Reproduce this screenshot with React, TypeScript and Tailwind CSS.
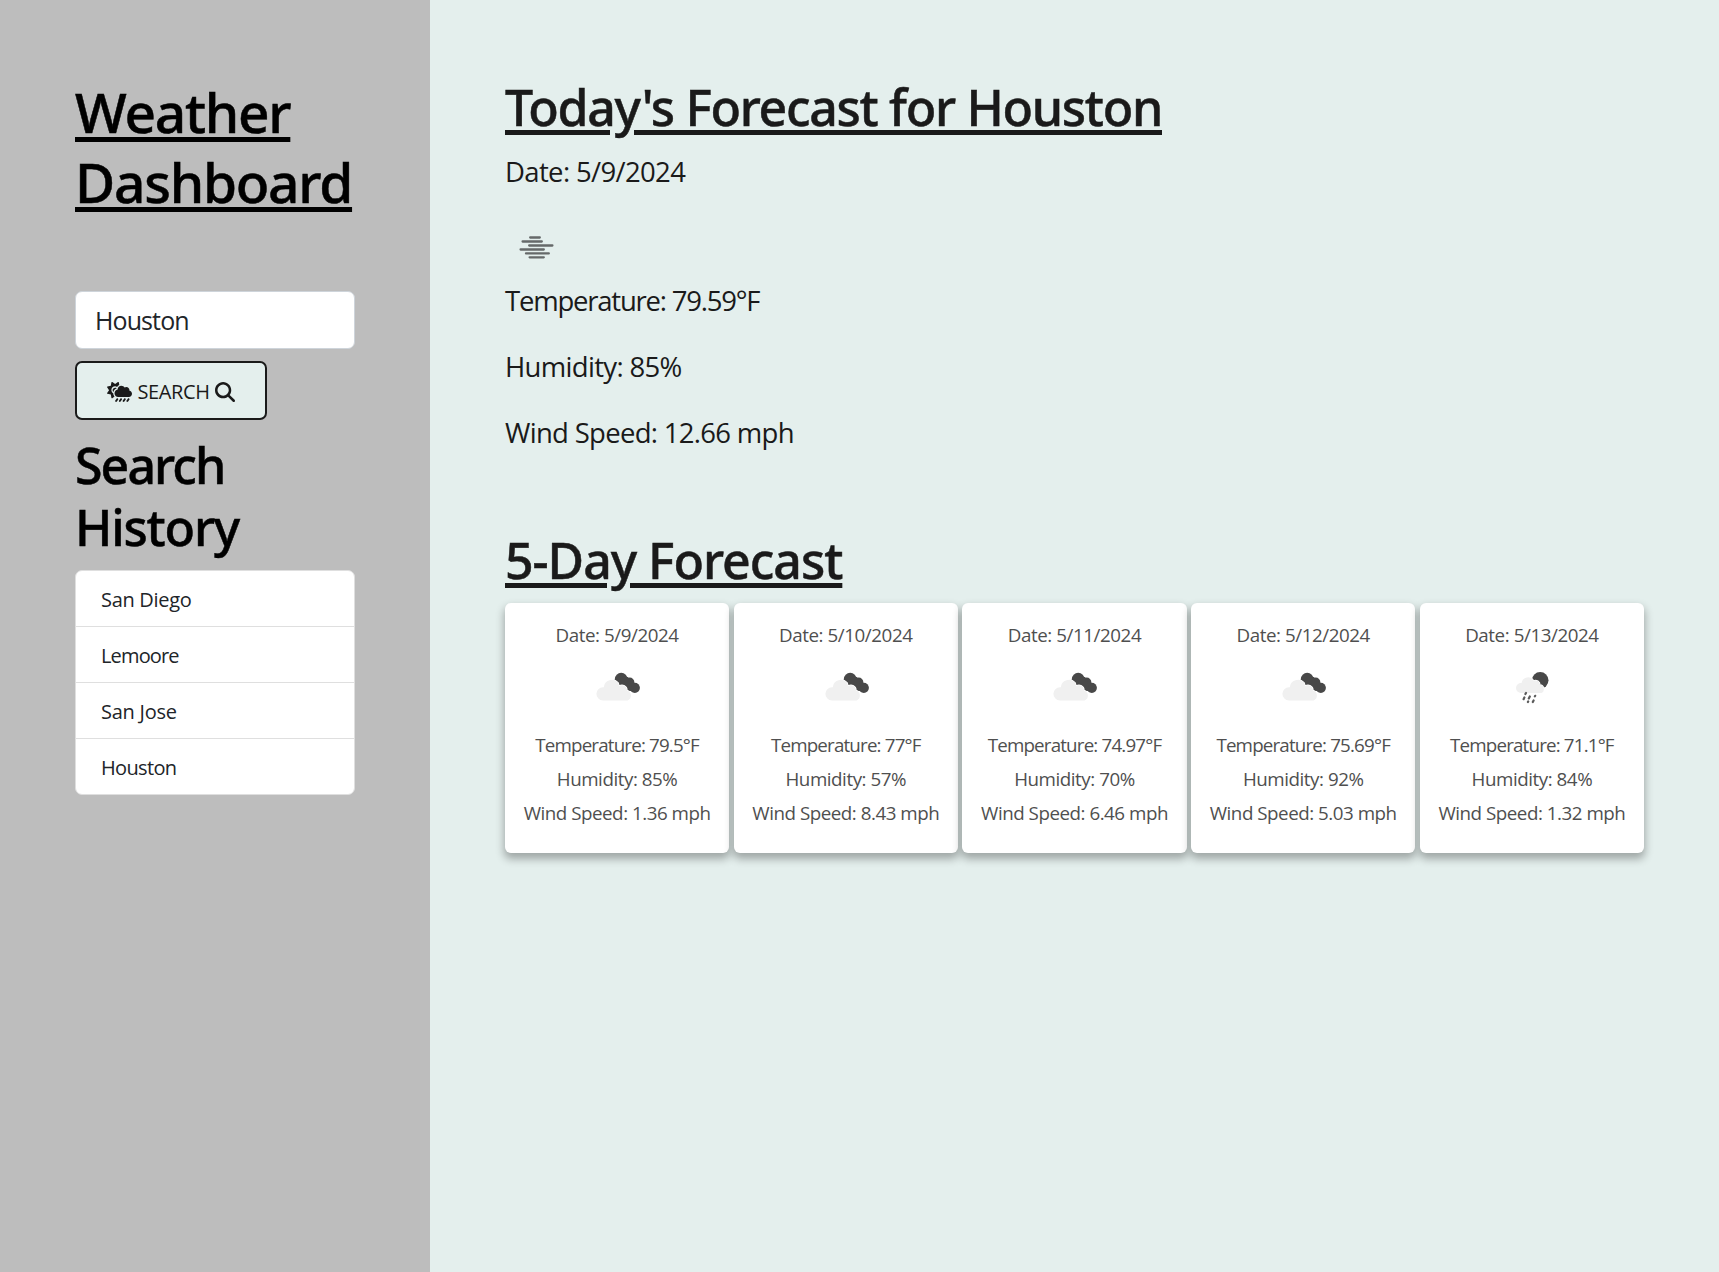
import { FaCloudSunRain, FaMagnifyingGlass } from 'react-icons/fa6';

const history = [
  { city: 'San Diego', tracking: 'tracking-[-0.3px]' },
  { city: 'Lemoore', tracking: 'tracking-[-0.85px]' },
  { city: 'San Jose', tracking: 'tracking-[-0.25px]' },
  { city: 'Houston', tracking: 'tracking-[-0.65px]' },
];

const days = [
  { date: '5/9/2024', icon: 'clouds', temp: '79.5', humidity: '85', wind: '1.36' },
  { date: '5/10/2024', icon: 'clouds', temp: '77', humidity: '57', wind: '8.43' },
  { date: '5/11/2024', icon: 'clouds', temp: '74.97', humidity: '70', wind: '6.46' },
  { date: '5/12/2024', icon: 'clouds', temp: '75.69', humidity: '92', wind: '5.03' },
  { date: '5/13/2024', icon: 'rain', temp: '71.1', humidity: '84', wind: '1.32' },
];

function MistIcon() {
  return (
    <svg viewBox="0 0 64 64" className="block size-16" stroke="#656969" strokeWidth="2.3" strokeLinecap="round">
      <path d="M25.2 20.5H34.8M17.6 24.5H36.8M24.2 28.5H47.4M15.6 32.5H38.8M21 36.4H43.8M24.6 40.3H38.8" />
    </svg>
  );
}

function CloudsIcon() {
  return (
    <svg viewBox="0 0 64 64" className="block size-16">
      <g fill="#484848">
        <circle cx="36.2" cy="24.2" r="6.4" />
        <circle cx="44.6" cy="27.4" r="4.8" />
        <circle cx="49.8" cy="32.8" r="5.1" />
        <path d="M35 22H43L49 36H42Z" />
      </g>
      <path
        d="M18 45.4A6.6 6.6 0 0 1 18 32.2H18.8A8.2 8.2 0 0 1 33 27.6L34.2 31.2A5 5 0 0 1 42 35.4A5.3 5.3 0 0 1 42.6 45.4Z"
        fill="#f0f0f0"
        stroke="#fff"
        strokeWidth="1.4"
        paintOrder="stroke"
      />
    </svg>
  );
}

function RainIcon() {
  return (
    <svg viewBox="0 0 64 64" className="block size-16">
      <circle cx="40.2" cy="25.3" r="8.3" fill="#484848" />
      <path
        d="M21 38A5 5 0 0 1 21 28H21.6A6.4 6.4 0 0 1 33.6 25.8A4.6 4.6 0 0 1 40 30A4.2 4.2 0 0 1 41.4 38Z"
        fill="#f0f0f0"
        stroke="#fff"
        strokeWidth="1.4"
        paintOrder="stroke"
      />
      <path
        d="M26 38L25.4 39M24.4 42.4L23.6 44.2M29.8 41.4L28.8 43.4M28.2 46.4L27.9 47M35.2 40.8L34.9 41.3M33.6 45.4L32.8 47"
        stroke="#5a5a5a"
        strokeWidth="2.2"
        strokeLinecap="round"
      />
    </svg>
  );
}

export default function App() {
  return (
    <div className="flex h-[1272px] w-full bg-[#e4efed] font-['Open_Sans',sans-serif] text-[#1a1a1a]">
      <aside className="w-[430px] shrink-0 bg-[#bdbdbd] px-[75px] pt-[77px]">
        <h1 className="font-['Noto_Sans',sans-serif] text-[55px] leading-[70px] font-medium tracking-[-1.25px] text-black underline decoration-[5px] underline-offset-[3.5px] [-webkit-text-stroke:0.5px]">
          Weather Dashboard
        </h1>
        <form className="mt-[74px]">
          <input
            readOnly
            value="Houston"
            className="block h-[58px] w-[280px] rounded-[7px] border border-[#ced4da] bg-white pr-4 pl-[19px] text-[25px] tracking-[-0.9px] text-[#212529] outline-none"
          />
          <button
            type="button"
            className="mt-3 flex h-[59px] w-48 items-center justify-center gap-[5px] rounded-[7px] border-2 border-[#1a1a1a] bg-[#e4efed] pt-0.5 text-[20px] tracking-[-0.4px]"
          >
            <FaCloudSunRain className="h-5 w-[25px]" />
            SEARCH
            <FaMagnifyingGlass className="size-5" />
          </button>
        </form>
        <h2 className="mt-3.5 flex flex-col font-['Noto_Sans',sans-serif] text-[50px] leading-[62px] font-medium text-black [-webkit-text-stroke:0.5px]">
          <span className="tracking-[-1.9px]">Search</span>
          <span className="tracking-[-1.2px]">History</span>
        </h2>
        <ul className="mt-3 w-[280px] divide-y divide-[#dfdfdf] rounded-[7px] border border-[#dfdfdf] bg-white text-[20px] text-[#212529]">
          {history.map(({ city, tracking }) => (
            <li key={city} className={`h-14 pl-[25px] leading-[57px] last:h-[55px] ${tracking}`}>
              {city}
            </li>
          ))}
        </ul>
      </aside>

      <main className="grow px-[75px] pt-[76px]">
        <section>
          <h2 className="font-['Noto_Sans',sans-serif] text-[50px] leading-[63px] font-medium tracking-[-1.3px] underline decoration-[5px] underline-offset-[3.5px] [-webkit-text-stroke:0.5px]">
            Today's Forecast for Houston
          </h2>
          <div className="mt-3 text-[27.5px] leading-[42px]">
            <p className="tracking-[-0.65px]">Date: 5/9/2024</p>
            <div className="mt-6 -mb-px">
              <MistIcon />
            </div>
            <p className="tracking-[-1.22px]">Temperature: 79.59°F</p>
            <p className="mt-6 tracking-[-0.68px]">Humidity: 85%</p>
            <p className="mt-6 tracking-[-0.7px]">Wind Speed: 12.66 mph</p>
          </div>
        </section>

        <section className="mt-[75px]">
          <h2 className="font-['Noto_Sans',sans-serif] text-[50px] leading-[63px] font-medium tracking-[-1.02px] underline decoration-[5px] underline-offset-[3.5px] [-webkit-text-stroke:0.5px]">
            5-Day Forecast
          </h2>
          <div className="mt-[11px] grid grid-cols-5 gap-[4.5px]">
            {days.map((day) => (
              <article
                key={day.date}
                className="flex h-[250px] flex-col items-center rounded-[6px] bg-white pt-[15px] text-[18.75px] leading-[34px] whitespace-nowrap text-[#4f4f4f] shadow-[0_5px_9px_1px_rgba(0,0,0,0.3)]"
              >
                <p className="tracking-[-0.43px]">Date: {day.date}</p>
                <div className="mt-[3px] mb-[9px]">{day.icon === 'rain' ? <RainIcon /> : <CloudsIcon />}</div>
                <p className="tracking-[-0.82px]">Temperature: {day.temp}°F</p>
                <p className="tracking-[-0.45px]">Humidity: {day.humidity}%</p>
                <p className="tracking-[-0.47px]">Wind Speed: {day.wind} mph</p>
              </article>
            ))}
          </div>
        </section>
      </main>
    </div>
  );
}
